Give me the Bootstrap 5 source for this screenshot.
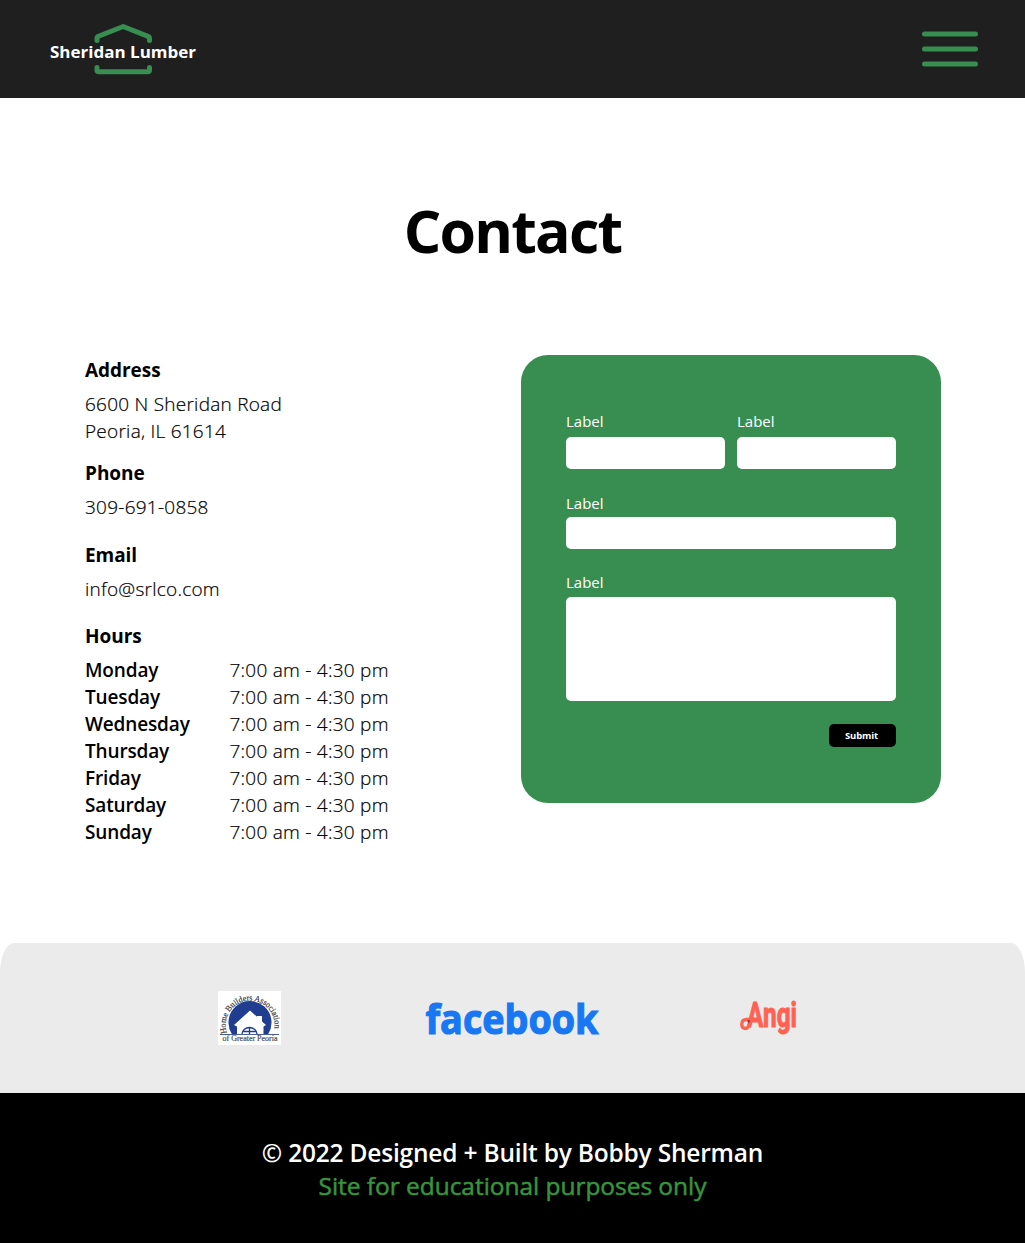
<!DOCTYPE html>
<html lang="en">
<head>
<meta charset="utf-8">
<meta name="viewport" content="width=device-width, initial-scale=1">
<title>Contact - Sheridan Lumber</title>
<link href="https://cdn.jsdelivr.net/npm/bootstrap@5.3.0/dist/css/bootstrap.min.css" rel="stylesheet">
<style>
body { font-family: "Open Sans", "Noto Sans", sans-serif; color: #000; background: #fff; }
.topbar { height: 98px; background: #1f1f1f; padding: 0 47px 0 48px; }
.page-title { font-size: 59px; font-weight: 700; line-height: 80px; margin: 92px 0 85px; letter-spacing: -1.8px; }
.contact-area { height: 588px; padding: 0 84px 0 85px; }
.info { font-size: 19px; line-height: 27px; font-weight: 300; padding-top: 2px; color: #000; letter-spacing: .25px; -webkit-text-stroke: .2px #000; }
.info h2, .day { -webkit-text-stroke: 0; }
.info h2 { font-size: 19px; line-height: 27px; font-weight: 700; margin: 0 0 7px; letter-spacing: -.05px; }
.info h2.sec-phone { margin-top: 15px; }
.info h2.sec-email { margin-top: 21px; }
.info h2.sec-hours { margin-top: 20px; }
.day { width: 144.5px; font-weight: 600; letter-spacing: -.15px; }
.quote-form { width: 420px; height: 448px; border-radius: 27px; background: #378e50; padding: 56px 45px 0; }
.quote-form label { font-size: 15px; line-height: 20px; color: #fff; display: block; }
.quote-form .form-control { height: 32.5px; border: 0; border-radius: 5px; padding: 0 8px; resize: none; }
.quote-form textarea.form-control { height: 104.5px; }
.name-row { gap: 12px; }
.name-row label { margin-bottom: 5.5px; }
.quote-form .lbl-mid { margin: 24px 0 3.5px; }
.quote-form .lbl-msg { margin: 23px 0 4.5px; }
.send-row { margin-top: 23px; }
.send { width: 67px; height: 23px; background: #000; color: #fff; font-size: 9.5px; font-weight: 700; line-height: 23px; padding: 0 2px 0 0; border: 0; border-radius: 5px; letter-spacing: -.1px; }
.partners { height: 150px; background: #ebebeb; border-radius: 14px 14px 0 0 / 30px 30px 0 0; padding: 48px 0 0 218px; }
.partners svg { overflow: visible; }
.logo-fb { margin-left: 141px; }
.logo-angi { margin-left: 134px; }
.site-footer { height: 150px; background: #000; color: #fff; font-size: 24.5px; line-height: 33px; font-weight: 600; padding-top: 43px; letter-spacing: -.2px; }
.site-footer .note { color: #37953b; font-weight: 400; letter-spacing: -.04px; -webkit-text-stroke: .5px #37953b; }
</style>
</head>
<body>
<header class="topbar d-flex justify-content-between align-items-center">
  <a href="#" class="d-block" aria-label="Sheridan Lumber">
    <svg class="d-block" width="150" height="54" viewBox="48 22 150 54">
      <g fill="none" stroke="#378e50" stroke-width="5" stroke-linecap="round" stroke-linejoin="round">
        <path d="M97 40.5V38.500Q97 37 98.500 36.300L123.200 26.500L148 36.300Q149.500 37 149.500 38.500V40.500"/>
        <path d="M97 67.500V70Q97 71.800 99 71.800H147.500Q149.500 71.800 149.500 70V67.500"/>
      </g>
      <text x="50" y="58" textLength="146" lengthAdjust="spacingAndGlyphs" fill="#fff" font-size="16.500" font-weight="700">Sheridan Lumber</text>
    </svg>
  </a>
  <button class="btn p-0 border-0" aria-label="Menu">
    <svg class="d-block" width="56" height="36" viewBox="0 0 56 36" stroke="#378e50" stroke-width="5" stroke-linecap="round">
      <path d="M2.500 3H53.500M2.500 18H53.500M2.500 33H53.500"/>
    </svg>
  </button>
</header>
<main>
  <h1 class="page-title text-center">Contact</h1>
  <section class="contact-area d-flex justify-content-between align-items-start">
    <div class="info">
      <h2>Address</h2>
      <div><span>6600 N Sheridan Road</span><br><span>Peoria, IL 61614</span></div>
      <h2 class="sec-phone">Phone</h2>
      <div><span>309-691-0858</span></div>
      <h2 class="sec-email">Email</h2>
      <div><span>info@srlco.com</span></div>
      <h2 class="sec-hours">Hours</h2>
      <div class="d-flex"><span class="day">Monday</span><span>7:00 am - 4:30 pm</span></div>
      <div class="d-flex"><span class="day">Tuesday</span><span>7:00 am - 4:30 pm</span></div>
      <div class="d-flex"><span class="day">Wednesday</span><span>7:00 am - 4:30 pm</span></div>
      <div class="d-flex"><span class="day">Thursday</span><span>7:00 am - 4:30 pm</span></div>
      <div class="d-flex"><span class="day">Friday</span><span>7:00 am - 4:30 pm</span></div>
      <div class="d-flex"><span class="day">Saturday</span><span>7:00 am - 4:30 pm</span></div>
      <div class="d-flex"><span class="day">Sunday</span><span>7:00 am - 4:30 pm</span></div>
    </div>
    <form class="quote-form">
      <div class="d-flex name-row">
        <div class="flex-fill"><label for="f1">Label</label><input id="f1" class="form-control"></div>
        <div class="flex-fill"><label for="f2">Label</label><input id="f2" class="form-control"></div>
      </div>
      <label for="f3" class="lbl-mid">Label</label><input id="f3" class="form-control">
      <label for="f4" class="lbl-msg">Label</label><textarea id="f4" class="form-control"></textarea>
      <div class="d-flex justify-content-end send-row"><button type="button" class="btn send">Submit</button></div>
    </form>
  </section>
</main>
<section class="partners">
  <div class="d-flex align-items-start">
    <svg width="63" height="54" viewBox="218 991 63 54">
      <rect x="218" y="991" width="63" height="54" fill="#fff"/>
      <path d="M231.800 1034A21.500 21.500 0 1 1 268.200 1034Z" fill="#203d8f"/>
      <path d="M234 1025L250 1010.500L257 1016.800V1016H262V1021.500L266 1025L263.500 1026.500V1034H237V1026.500Z" fill="#fff"/>
      <path d="M242 1034A7.500 6.500 0 0 1 257 1034M249.500 1027.500V1034M242.500 1031.500H256.500" fill="none" stroke="#203d8f" stroke-width="1.300"/>
      <path d="M220 1034.500H279" stroke="#4a5f91" stroke-width="1"/>
      <path id="arc" d="M227 1033A24.500 24.500 0 1 1 274 1031" fill="none"/>
      <text font-family="Liberation Serif, serif" font-size="8.500" fill="#3b3f4a" stroke="#3b3f4a" stroke-width=".2"><textPath href="#arc" textLength="88" lengthAdjust="spacingAndGlyphs">Home Builders Association</textPath></text>
      <text x="222.500" y="1041" textLength="55" lengthAdjust="spacingAndGlyphs" font-family="Liberation Serif, serif" font-size="7.500" fill="#4b4f5c" stroke="#4b4f5c" stroke-width=".2">of Greater Peoria</text>
    </svg>
    <svg class="logo-fb" width="180" height="54" viewBox="422 991 180 54">
      <text x="425.500" y="1034" textLength="173" lengthAdjust="spacingAndGlyphs" font-size="42" font-weight="700" fill="#1877f2" stroke="#1877f2" stroke-width="1.200">facebook</text>
    </svg>
    <svg class="logo-angi" width="64" height="54" viewBox="736 991 64 54">
      <text x="747" y="1027" textLength="50" lengthAdjust="spacingAndGlyphs" font-family="Roboto, sans-serif" font-size="34.500" font-weight="700" fill="#ff6153" stroke="#ff6153" stroke-width="1">Angi</text>
      <path d="M755 1019.500H746.500Q741.700 1019.500 741.700 1024.500Q742 1028.500 745.500 1028.500Q749 1028.500 750.500 1021" fill="none" stroke="#ff6153" stroke-width="3.300"/>
      <path d="M747 1020.500L750 1020L749 1023.500Z" fill="#8c2c34"/>
    </svg>
  </div>
</section>
<footer class="site-footer text-center">
  <div><span>© 2022 Designed + Built by Bobby Sherman</span></div>
  <div class="note"><span>Site for educational purposes only</span></div>
</footer>
<script src="https://cdn.jsdelivr.net/npm/bootstrap@5.3.0/dist/js/bootstrap.bundle.min.js"></script>
</body>
</html>
